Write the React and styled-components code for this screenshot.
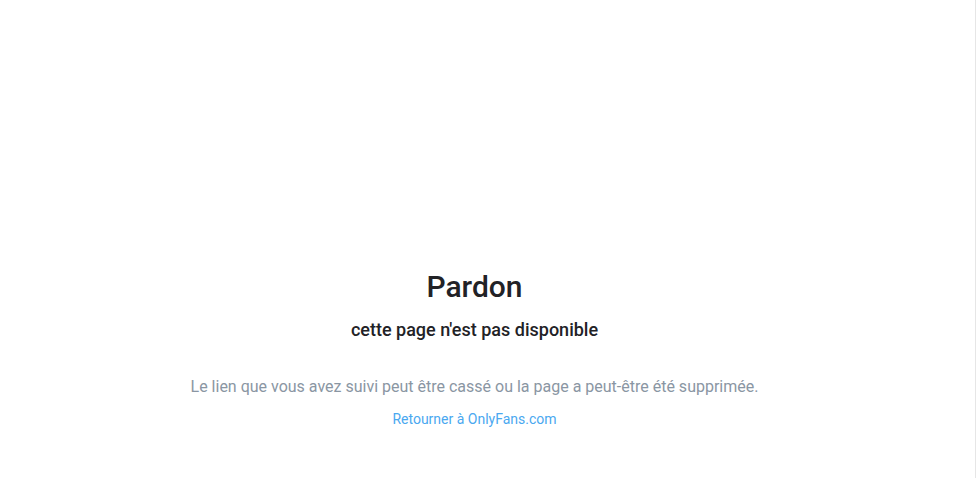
import React from 'react'
import styled, { createGlobalStyle } from 'styled-components';

const GlobalStyle = createGlobalStyle`
    html, body {
        margin: 0;
        padding: 0;
        background: #fff;
        font-family: Roboto, "Liberation Sans", sans-serif;
    }
`;

const App = () => {
  return (
    <>
      <GlobalStyle />
      <Page>
        <Main>
          <Content>
            <Title>Pardon</Title>
            <Subtitle>cette page n'est pas disponible</Subtitle>
            <Text>Le lien que vous avez suivi peut être cassé ou la page a peut-être été supprimée.</Text>
            <BackLink href="#">Retourner à OnlyFans.com</BackLink>
          </Content>
        </Main>
      </Page>
    </>
  )
}

export default App;

const Page = styled.div`
    display: flex;
    height: 478px;
`;

const Main = styled.div`
    flex: 0 0 976px;
    box-sizing: border-box;
    border-right: 1px solid #e6e6e6;
    display: flex;
    flex-direction: column;
    justify-content: flex-end;
    padding: 0 26px 49px 0;
`;

const Content = styled.div`
    display: flex;
    flex-direction: column;
    align-items: center;
    text-align: center;
`;

const Title = styled.h1`
    margin: 0;
    font-size: 30px;
    font-weight: 500;
    line-height: 36px;
    color: #222226;
`;

const Subtitle = styled.h2`
    margin: 13px 0 0;
    font-size: 18px;
    font-weight: 500;
    line-height: 24px;
    color: #222226;
`;

const Text = styled.p`
    margin: 33px 0 0;
    font-size: 16px;
    line-height: 24px;
    color: #8a96a3;
`;

const BackLink = styled.a`
    margin-top: 10px;
    font-size: 14px;
    line-height: 20px;
    color: #4aa8f0;
    text-decoration: none;
`;
